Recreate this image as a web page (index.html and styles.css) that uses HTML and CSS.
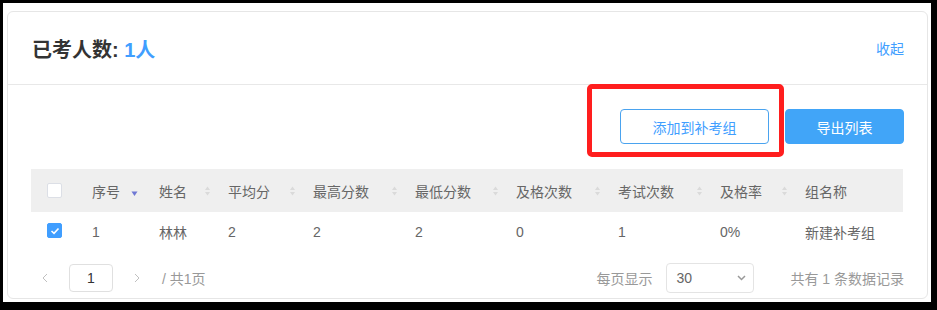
FILE: index.html
```html
<!DOCTYPE html>
<html lang="zh-CN">
<head>
<meta charset="utf-8">
<title>已考人数</title>
<link rel="stylesheet" href="styles.css">
</head>
<body>
<div class="frame">
  <div class="card">
    <div class="card-head">
      <h2 class="title">已考人数: <span class="count">1人</span></h2>
      <a class="collapse">收起</a>
    </div>
    <div class="toolbar">
      <button class="btn btn-outline">添加到补考组</button>
      <button class="btn btn-primary">导出列表</button>
      <div class="annot"></div>
    </div>
    <table class="grid">
      <colgroup>
        <col class="c-chk"><col class="c-no"><col class="c-name"><col class="c-avg"><col class="c-max"><col class="c-min"><col class="c-pass"><col class="c-exam"><col class="c-rate"><col class="c-group">
      </colgroup>
      <thead>
        <tr>
          <th class="chk-cell"><span class="checkbox"></span></th>
          <th class="th-active"><div class="th-in"><span>序号</span><svg class="sort" width="7" height="12" viewBox="0 0 7 12"><polygon points="0.5,6.5 6.5,6.5 3.5,11" fill="#6f78d4"/></svg></div></th>
          <th><div class="th-in"><span>姓名</span><svg class="sort" width="7" height="12" viewBox="0 0 7 12"><polygon points="1,5 6,5 3.5,1.5" fill="#dadada"/><polygon points="1,7 6,7 3.5,10.5" fill="#dadada"/></svg></div></th>
          <th><div class="th-in"><span>平均分</span><svg class="sort" width="7" height="12" viewBox="0 0 7 12"><polygon points="1,5 6,5 3.5,1.5" fill="#dadada"/><polygon points="1,7 6,7 3.5,10.5" fill="#dadada"/></svg></div></th>
          <th><div class="th-in"><span>最高分数</span><svg class="sort" width="7" height="12" viewBox="0 0 7 12"><polygon points="1,5 6,5 3.5,1.5" fill="#dadada"/><polygon points="1,7 6,7 3.5,10.5" fill="#dadada"/></svg></div></th>
          <th><div class="th-in"><span>最低分数</span><svg class="sort" width="7" height="12" viewBox="0 0 7 12"><polygon points="1,5 6,5 3.5,1.5" fill="#dadada"/><polygon points="1,7 6,7 3.5,10.5" fill="#dadada"/></svg></div></th>
          <th><div class="th-in"><span>及格次数</span><svg class="sort" width="7" height="12" viewBox="0 0 7 12"><polygon points="1,5 6,5 3.5,1.5" fill="#dadada"/><polygon points="1,7 6,7 3.5,10.5" fill="#dadada"/></svg></div></th>
          <th><div class="th-in"><span>考试次数</span><svg class="sort" width="7" height="12" viewBox="0 0 7 12"><polygon points="1,5 6,5 3.5,1.5" fill="#dadada"/><polygon points="1,7 6,7 3.5,10.5" fill="#dadada"/></svg></div></th>
          <th><div class="th-in"><span>及格率</span><svg class="sort" width="7" height="12" viewBox="0 0 7 12"><polygon points="1,5 6,5 3.5,1.5" fill="#dadada"/><polygon points="1,7 6,7 3.5,10.5" fill="#dadada"/></svg></div></th>
          <th><div class="th-in"><span>组名称</span></div></th>
        </tr>
      </thead>
      <tbody>
        <tr>
          <td class="chk-cell"><span class="checkbox checked"><svg width="10" height="8" viewBox="0 0 10 8"><polyline points="1.5,4 4,6.3 8.5,1.5" fill="none" stroke="#fff" stroke-width="1.6"/></svg></span></td>
          <td>1</td>
          <td>林林</td>
          <td>2</td>
          <td>2</td>
          <td>2</td>
          <td>0</td>
          <td>1</td>
          <td>0%</td>
          <td>新建补考组</td>
        </tr>
      </tbody>
    </table>
    <div class="pager">
      <div class="pager-left">
        <span class="pg-btn"><svg width="6" height="10" viewBox="0 0 6 10"><polyline points="5,1 1,5 5,9" fill="none" stroke="#c0c0c0" stroke-width="1"/></svg></span>
        <span class="pg-input">1</span>
        <span class="pg-btn"><svg width="6" height="10" viewBox="0 0 6 10"><polyline points="1,1 5,5 1,9" fill="none" stroke="#c0c0c0" stroke-width="1"/></svg></span>
        <span class="pg-total">/ 共1页</span>
      </div>
      <div class="pager-right">
        <span class="pg-label">每页显示</span>
        <span class="pg-select"><span>30</span><svg width="9" height="6" viewBox="0 0 9 6"><polyline points="1,1 4.5,4.5 8,1" fill="none" stroke="#999" stroke-width="1.5"/></svg></span>
        <span class="pg-count">共有 1 条数据记录</span>
      </div>
    </div>
  </div>
</div>
</body>
</html>
```
FILE: styles.css
```css
* { box-sizing: border-box; }
html, body { margin: 0; }
body {
  background: #000;
  padding: 3px 6px 8px 3px;
  height: 310px;
  font-family: "Liberation Sans", "Noto Sans CJK SC", sans-serif;
  font-size: 14px;
  color: #666;
}
.frame {
  background: #fff;
  height: 299px;
  padding: 8px 3px 0 4px;
}
.card {
  border: 1px solid #e6e6e6;
  border-radius: 6px;
  height: 288px;
  background: #fff;
}
.card-head {
  height: 73px;
  border-bottom: 1px solid #e8e8e8;
  display: flex;
  align-items: center;
  justify-content: space-between;
  padding: 0 23px 0 24px;
}
.title {
  margin: 0;
  font-size: 20px;
  font-weight: bold;
  color: #333;
}
.count { color: #409eff; }
.collapse {
  color: #409eff;
  font-size: 14px;
  cursor: pointer;
}
.toolbar {
  position: relative;
  display: flex;
  justify-content: flex-end;
  gap: 16px;
  padding: 24px 23px 25px 23px;
}
.btn {
  height: 35px;
  border-radius: 4px;
  font-family: inherit;
  font-size: 14px;
  padding: 0;
  cursor: pointer;
}
.btn-outline {
  width: 149px;
  background: #fff;
  border: 1px solid #4aa3ef;
  color: #409eff;
}
.btn-primary {
  width: 119px;
  background: #41a5f8;
  border: 1px solid #41a5f8;
  color: #fff;
}
.annot {
  position: absolute;
  left: 579px;
  top: -1px;
  width: 197px;
  height: 73px;
  border: 5px solid #ff1e1e;
  border-radius: 5px;
}
.grid {
  width: 872px;
  margin-left: 23px;
  border-collapse: collapse;
  table-layout: fixed;
}
.c-chk { width: 51px; }
.c-no { width: 67px; }
.c-name { width: 69px; }
.c-avg { width: 85px; }
.c-max { width: 102px; }
.c-min { width: 101px; }
.c-pass { width: 102px; }
.c-exam { width: 102px; }
.c-rate { width: 85px; }
.c-group { width: 108px; }
.grid th {
  background: #efefef;
  height: 43px;
  font-weight: normal;
  text-align: left;
  color: #666;
  padding: 0 7px 0 10px;
}
.grid th.th-active { padding-right: 11px; }
.th-in {
  display: flex;
  align-items: center;
  justify-content: space-between;
}
.sort { display: block; }
.grid td {
  height: 40px;
  padding: 0 10px;
  color: #666;
  white-space: nowrap;
}
.grid .chk-cell { padding: 0 0 0 16px; }
.checkbox {
  display: flex;
  align-items: center;
  justify-content: center;
  width: 15px;
  height: 15px;
  border: 1px solid #dcdfe6;
  border-radius: 2px;
  background: #fff;
}
.checkbox.checked {
  background: #409eff;
  border-color: #409eff;
  margin-top: -3px;
}
.pager {
  display: flex;
  justify-content: space-between;
  align-items: center;
  height: 30px;
  margin-top: 11px;
  padding: 0 23px;
}
.pager-left, .pager-right {
  display: flex;
  align-items: center;
}
.pg-btn {
  width: 28px;
  height: 28px;
  display: flex;
  align-items: center;
  justify-content: center;
}
.pg-input {
  width: 44px;
  height: 28px;
  margin: 0 10px;
  border: 1px solid #e0e0e0;
  border-radius: 4px;
  display: flex;
  align-items: center;
  justify-content: center;
  color: #333;
}
.pg-total {
  margin-left: 11px;
  color: #999;
}
.pg-label { color: #999; }
.pg-select {
  width: 88px;
  height: 30px;
  margin: 0 36px 0 14px;
  border: 1px solid #e4e4e4;
  border-radius: 4px;
  display: flex;
  align-items: center;
  justify-content: space-between;
  padding: 0 7px 0 9px;
  color: #666;
}
.pg-count { color: #999; }
```
